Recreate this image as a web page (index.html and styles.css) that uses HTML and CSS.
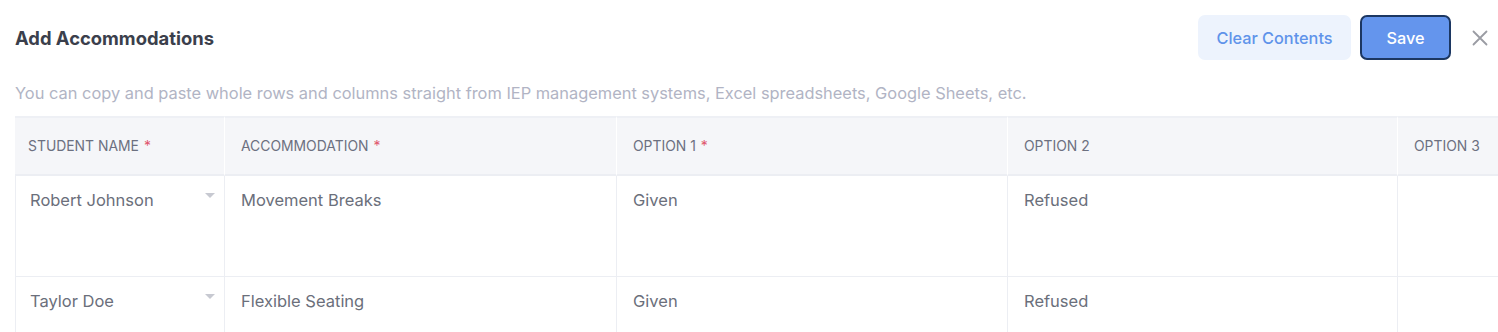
FILE: index.html
```html
<!DOCTYPE html>
<html>
<head>
<meta charset="utf-8">
<link rel="stylesheet" href="styles.css">
</head>
<body>
<div class="modal">
  <div class="topbar">
    <h1 class="title">Add Accommodations</h1>
    <div class="actions">
      <button class="btn btn-light">Clear Contents</button>
      <button class="btn btn-primary">Save</button>
      <button class="close" aria-label="Close">
        <svg width="16" height="16" viewBox="0 0 16 16"><path d="M1.5 1.5L14.5 14.5M14.5 1.5L1.5 14.5" stroke="#9a9ca3" stroke-width="1.8" fill="none" stroke-linecap="round"/></svg>
      </button>
    </div>
  </div>
  <p class="hint">You can copy and paste whole rows and columns straight from IEP management systems, Excel spreadsheets, Google Sheets, etc.</p>
  <div class="table">
    <div class="th">STUDENT NAME<span class="req">*</span></div>
    <div class="th">ACCOMMODATION<span class="req">*</span></div>
    <div class="th">OPTION 1<span class="req">*</span></div>
    <div class="th">OPTION 2</div>
    <div class="th">OPTION 3</div>

    <div class="td first tall"><span class="name">Robert Johnson</span><span class="caret"></span></div>
    <div class="td tall">Movement Breaks</div>
    <div class="td tall">Given</div>
    <div class="td tall">Refused</div>
    <div class="td tall"></div>

    <div class="td first"><span class="name">Taylor Doe</span><span class="caret"></span></div>
    <div class="td">Flexible Seating</div>
    <div class="td">Given</div>
    <div class="td">Refused</div>
    <div class="td"></div>
  </div>
</div>
</body>
</html>
```

FILE: styles.css
```css
* { box-sizing: border-box; }
html, body {
  margin: 0;
  padding: 0;
  background: #ffffff;
  font-family: Inter, Roboto, "Liberation Sans", Arial, sans-serif;
  overflow: hidden;
}
.modal {
  width: 1498px;
  height: 332px;
  overflow: hidden;
}
.topbar {
  display: flex;
  align-items: center;
  justify-content: space-between;
  padding: 15px 8px 0 15px;
  height: 60px;
}
.title {
  margin: 0;
  font-size: 18.4px;
  font-weight: 700;
  color: #3b3f4c;
}
.actions {
  display: flex;
  align-items: center;
}
.btn {
  height: 45px;
  border-radius: 7px;
  font-family: Inter, Roboto, "Liberation Sans", Arial, sans-serif;
  font-size: 16.3px;
  font-weight: 500;
  cursor: pointer;
}
.btn-light {
  width: 153px;
  border: none;
  background: #edf3fd;
  color: #5f93ea;
  margin-right: 9px;
}
.btn-primary {
  width: 91px;
  border: 2px solid #1c3762;
  background: #6495ed;
  color: #ffffff;
  margin-right: 19px;
}
.close {
  width: 20px;
  height: 20px;
  border: none;
  background: none;
  padding: 0;
  display: flex;
  align-items: center;
  justify-content: center;
}
.hint {
  margin: 0;
  padding: 23px 0 0 15px;
  height: 56px;
  font-size: 16.4px;
  color: #b1b4c4;
  white-space: nowrap;
}
.table {
  margin-left: 15px;
  display: grid;
  grid-template-columns: 210px 392px 391px 390px 200px;
  grid-template-rows: 60px 101px 60px;
  width: 1600px;
}
.th {
  background: #f5f6f9;
  border-top: 2px solid #eef0f5;
  border-bottom: 2px solid #eceef3;
  border-right: 1px solid #ffffff;
  display: flex;
  align-items: center;
  padding: 0 0 0 16px;
  font-size: 13.9px;
  color: #6c7080;
}
.th:first-child { padding-left: 13px; }
.req { color: #e0566e; margin-left: 5px; }
.td {
  border-right: 1px solid #eceef3;
  border-bottom: 1px solid #eceef3;
  padding: 15px 16px 0 16px;
  font-size: 16.5px;
  color: #6b6f7b;
  line-height: 19px;
  display: flex;
  align-items: flex-start;
}
.td.first {
  border-left: 1px solid #eceef3;
  padding-left: 14px;
  padding-right: 9px;
  justify-content: space-between;
}
.caret {
  margin-top: 2px;
  width: 0;
  height: 0;
  border-left: 5px solid transparent;
  border-right: 5px solid transparent;
  border-top: 5px solid #c7c9d1;
}
```
